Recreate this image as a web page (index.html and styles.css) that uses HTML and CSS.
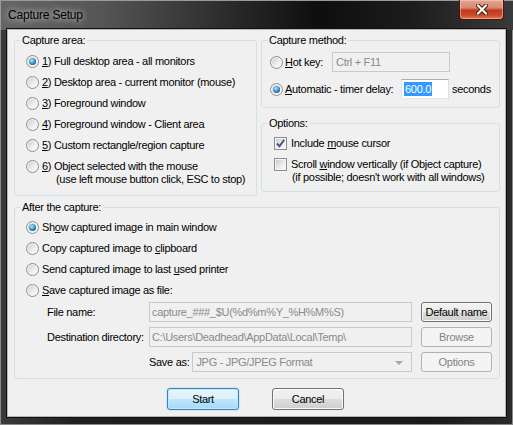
FILE: index.html
```html
<!DOCTYPE html>
<html lang="en">
<head>
    <meta charset="UTF-8">
    <title>Capture Setup</title>
    <link rel="stylesheet" href="styles.css">
</head>
<body>
    <div class="window">
        <div class="titlebar">
            <span class="title">Capture Setup</span>
            <div class="close">
                <svg width="12" height="11" viewBox="0 0 12 11">
                    <path d="M2 1.5 L10 9.5 M10 1.5 L2 9.5" stroke="#3a1008" stroke-width="4" stroke-linecap="square"/>
                    <path d="M2 1.5 L10 9.5 M10 1.5 L2 9.5" stroke="#fff" stroke-width="2.2" stroke-linecap="square"/>
                </svg>
            </div>
        </div>

        <div class="client">
            <div class="top-row">
                <fieldset class="group area">
                    <legend>Capture area:</legend>
                    <div class="opt"><span class="radio checked"></span><span><u>1</u>) Full desktop area - all monitors</span></div>
                    <div class="opt"><span class="radio"></span><span><u>2</u>) Desktop area - current monitor (mouse)</span></div>
                    <div class="opt"><span class="radio"></span><span><u>3</u>) Foreground window</span></div>
                    <div class="opt"><span class="radio"></span><span><u>4</u>) Foreground window - Client area</span></div>
                    <div class="opt"><span class="radio"></span><span><u>5</u>) Custom rectangle/region capture</span></div>
                    <div class="opt">
                        <span class="radio"></span>
                        <span><u>6</u>) Object selected with the mouse<span class="second">(use left mouse button click, ESC to stop)</span></span>
                    </div>
                </fieldset>

                <div class="right-col">
                    <fieldset class="group method">
                        <legend>Capture method:</legend>
                        <div class="mrow">
                            <span class="radio"></span>
                            <span class="mlabel hotkey"><u>H</u>ot key:</span>
                            <span class="textbox disabled hotkey-box">Ctrl + F11</span>
                        </div>
                        <div class="mrow">
                            <span class="radio checked"></span>
                            <span class="mlabel timer"><u>A</u>utomatic - timer delay:</span>
                            <span class="textbox timer-box"><span class="selected">600.0</span></span>
                            <span class="unit">seconds</span>
                        </div>
                    </fieldset>

                    <fieldset class="group options">
                        <legend>Options:</legend>
                        <div class="opt check-opt">
                            <span class="checkbox checked">
                                <svg width="11" height="11" viewBox="0 0 11 11">
                                    <path d="M2 5.5 L4.5 8.3 L9.2 1.8" fill="none" stroke="#3d5488" stroke-width="1.9"/>
                                </svg>
                            </span>
                            <span>Include <u>m</u>ouse cursor</span>
                        </div>
                        <div class="opt check-opt">
                            <span class="checkbox"></span>
                            <span>Scroll <u>w</u>indow vertically (if Object capture)<span class="second small">(if possible; doesn't work with all windows)</span></span>
                        </div>
                    </fieldset>
                </div>
            </div>

            <fieldset class="group after">
                <legend>After the capture:</legend>
                <div class="opt"><span class="radio checked"></span><span>Sh<u>o</u>w captured image in main window</span></div>
                <div class="opt"><span class="radio"></span><span>Copy captured image to <u>c</u>lipboard</span></div>
                <div class="opt"><span class="radio"></span><span>Send captured image to last <u>u</u>sed printer</span></div>
                <div class="opt"><span class="radio"></span><span><u>S</u>ave captured image as file:</span></div>

                <div class="file-grid">
                    <span class="flabel">File name:</span>
                    <span class="textbox disabled">capture_###_$U(%d%m%Y_%H%M%S)</span>
                    <span class="button">Default name</span>

                    <span class="flabel">Destination directory:</span>
                    <span class="textbox disabled">C:\Users\Deadhead\AppData\Local\Temp\</span>
                    <span class="button disabled">Browse</span>

                    <span></span>
                    <span class="save-as">
                        <span class="save-label">Save as:</span>
                        <span class="combo disabled">JPG - JPG/JPEG Format</span>
                    </span>
                    <span class="button disabled">Options</span>
                </div>
            </fieldset>

            <div class="buttons">
                <span class="button default">Start</span>
                <span class="button">Cancel</span>
            </div>
        </div>
    </div>
</body>
</html>
```

FILE: styles.css
```css
body {
    margin: 0;
    background: #000;
    font-family: "Liberation Sans", Arial, sans-serif;
    font-size: 11px;
    letter-spacing: -0.3px;
    color: #000;
    white-space: nowrap;
}

.window {
    width: 513px;
    height: 425px;
    display: flex;
    flex-direction: column;
    overflow: hidden;
    background: linear-gradient(to right, #3b3b3b, #1f1f1f 15%, #1a1a1a 85%, #2c2c2c);
    box-shadow: inset 0 0 0 1px #8a8a8a;
}

/* title bar */

.titlebar {
    height: 30px;
    flex-shrink: 0;
    display: flex;
    align-items: flex-start;
    background: linear-gradient(to right, #666 0%, #555 20%, #2a2a2a 45%, #0e0e0e 62%, #1c1c1c 80%, #3a3a3a 100%);
    box-shadow: inset 1px 1px 0 #9a9a9a;
}

.title {
    margin: 8px 0 0 8px;
    font-size: 12px;
    letter-spacing: -0.2px;
    line-height: 14px;
    color: #000;
    text-shadow: 0 0 6px rgba(255, 255, 255, 0.7), 0 0 10px rgba(255, 255, 255, 0.4);
}

.close {
    margin-left: auto;
    margin-right: 9px;
    width: 45px;
    height: 20px;
    box-sizing: border-box;
    display: flex;
    align-items: center;
    justify-content: center;
    border: 1px solid #4a150c;
    border-top: none;
    border-radius: 0 0 4px 4px;
    background: linear-gradient(#e6a493 0%, #d88a72 40%, #c2391d 55%, #c94a2d 80%, #dc7c5c 100%);
    box-shadow: inset 0 0 0 1px rgba(255, 220, 200, 0.45);
}

/* dialog body */

.client {
    flex: 1;
    margin: 0 8px 9px;
    padding: 4px 5px 6px 6px;
    background: #f0f0f0;
    box-shadow: 0 0 0 1px #b5b5b5, 0 0 0 2px #101010;
}

.top-row {
    display: flex;
    gap: 4px;
    align-items: flex-start;
}

.group {
    margin: 0;
    min-width: 0;
    box-sizing: border-box;
    border: 1px solid #d5dfe5;
    border-radius: 3px;
}

.group legend {
    padding: 0 2px;
    margin-left: -6px;
    line-height: 12px;
}

.area {
    width: 243px;
    padding: 5px 4px 5px 11px;
}

.right-col {
    flex: 1;
    display: flex;
    flex-direction: column;
}

.method {
    padding: 6px 4px 8px 8px;
}

.method legend {
    margin-left: -3px;
}

.options {
    margin-top: 9px;
    padding: 4px 4px 3px 12px;
}

.options legend {
    margin-left: -7px;
}

.after {
    margin-top: 5px;
    padding: 4px 7px 6px 11px;
}

/* option rows */

.opt {
    display: flex;
    align-items: flex-start;
    gap: 3px;
    padding: 4px 0;
    line-height: 13px;
}

.check-opt {
    gap: 4px;
}

.second {
    display: block;
    padding-left: 14px;
}

.second.small {
    padding-left: 1px;
}

.mrow {
    display: flex;
    align-items: center;
    height: 20px;
}

.mrow + .mrow {
    margin-top: 7px;
}

.mrow .radio {
    margin-right: 2px;
}

.mlabel.hotkey {
    width: 47px;
}

.mlabel.timer {
    width: 116px;
}

.unit {
    margin-left: 3px;
}

/* radio buttons and check boxes */

.radio {
    position: relative;
    flex-shrink: 0;
    width: 13px;
    height: 13px;
    box-sizing: border-box;
    border: 1px solid #8e8f8f;
    border-radius: 50%;
    background: linear-gradient(135deg, #c9c9c9, #f0f0f0 60%, #fdfdfd);
    box-shadow: inset 0 0 0 1px #f5f5f5;
}

.radio.checked::after {
    content: "";
    position: absolute;
    left: 2px;
    top: 2px;
    width: 7px;
    height: 7px;
    border-radius: 50%;
    background: radial-gradient(circle at 40% 35%, #b8ecfc 0, #4aa3d8 40%, #1d5e92 75%, #123f66 100%);
}

.checkbox {
    flex-shrink: 0;
    width: 13px;
    height: 13px;
    box-sizing: border-box;
    border: 1px solid #8e8f8f;
    background: linear-gradient(135deg, #c4c7cb, #eeeeee 60%, #fafafa);
    box-shadow: inset 0 0 0 1px #f4f4f4;
}

.checkbox svg {
    display: block;
}

/* text boxes, combo and buttons */

.textbox,
.combo {
    display: flex;
    align-items: center;
    height: 20px;
    box-sizing: border-box;
    padding-left: 2px;
    overflow: hidden;
    border: 1px solid;
    border-color: #abadb3 #dbdfe6 #e3e9ef #e2e3ea;
    background: #fff;
}

.textbox.disabled,
.combo.disabled {
    border-color: #c9c9c9;
    background: #f0f0f0;
    color: #8a8a8a;
}

.hotkey-box {
    width: 118px;
    padding-left: 3px;
}

.timer-box {
    width: 48px;
}

.selected {
    background: #3399ff;
    color: #fff;
    padding: 0 1px;
    line-height: 14px;
}

.combo {
    position: relative;
    flex: 1;
    padding-left: 3px;
}

.combo::after {
    content: "";
    position: absolute;
    right: 8px;
    top: 8px;
    border: 4px solid transparent;
    border-top-color: #a8a8a8;
    border-bottom: none;
}

.file-grid {
    display: grid;
    grid-template-columns: 102px 263px 80px;
    row-gap: 5px;
    grid-auto-rows: 20px;
    margin: 1px 0 0 21px;
    align-items: center;
}

.file-grid .button {
    margin-left: 9px;
}

.save-as {
    display: flex;
    align-items: center;
    gap: 3px;
    height: 20px;
}

.button {
    display: flex;
    align-items: center;
    justify-content: center;
    height: 20px;
    box-sizing: border-box;
    border: 1px solid #707070;
    border-radius: 3px;
    background: linear-gradient(#f2f2f2 0%, #ebebeb 50%, #dddddd 50%, #cfcfcf 100%);
    box-shadow: inset 0 0 0 1px #fbfbfb;
}

.button.disabled {
    border-color: #adb2b5;
    background: #f4f4f4;
    box-shadow: none;
    color: #838383;
}

.buttons {
    display: flex;
    justify-content: center;
    gap: 33px;
    margin-top: 9px;
    padding-right: 3px;
}

.buttons .button {
    width: 72px;
    height: 22px;
}

.button.default {
    border-color: #3c7fb1;
    background: linear-gradient(#eaf6fd 0%, #d9f0fc 50%, #bee6fd 50%, #a7d9f5 100%);
    box-shadow: inset 0 0 0 1px #c4e8fa, 0 0 2px #8fd0f2;
}
```
